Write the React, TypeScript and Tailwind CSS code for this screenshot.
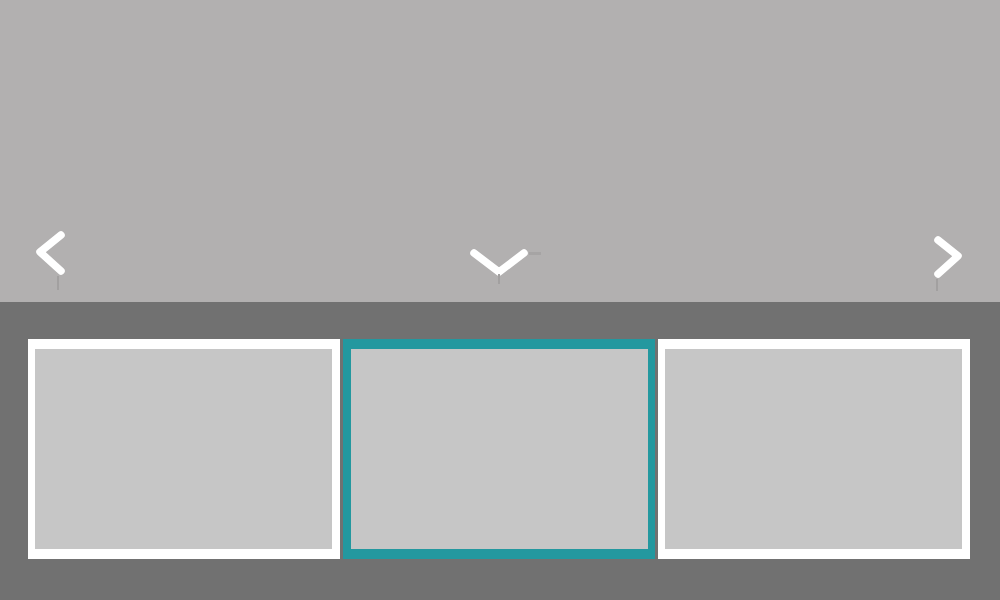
import React from 'react';

const Chevron: React.FC<{ d: string; w: number; h: number; stub: React.ReactNode }> = ({ d, w, h, stub }) => (
  <div className="relative">
    <svg width={w} height={h} viewBox={`0 0 ${w} ${h}`} fill="none" className="blur-[0.6px]">
      <path d={d} stroke="#ffffff" strokeWidth={7.5} strokeLinecap="round" strokeLinejoin="round" />
    </svg>
    {stub}
  </div>
);

export default function App() {
  const thumbs = [false, true, false];

  return (
    <div className="w-[1000px] h-[600px] flex flex-col bg-[#717171] overflow-hidden">
      <div className="h-[302px] bg-[#b2b0b0] flex items-start justify-between pt-[228px] pl-[35px] pr-[35px]">
        <Chevron
          w={40}
          h={50}
          d="M26 7 L5 24 L26 43"
          stub={<div className="absolute left-[22px] top-[48px] w-[2px] h-[14px] bg-[#a2a0a0]" />}
        />
        <div className="pt-[18px] pl-[3px]">
          <Chevron
            w={76}
            h={40}
            d="M7 7 L32 26 L57 7"
            stub={
              <>
                <div className="absolute left-[31px] top-[28px] w-[2px] h-[10px] bg-[#a2a0a0]" />
                <div className="absolute left-[62px] top-[6px] w-[12px] h-[3px] bg-[#a6a4a4]" />
              </>
            }
          />
        </div>
        <div className="pt-[5px]">
          <Chevron
            w={34}
            h={50}
            d="M7 7 L27 23 L7 41"
            stub={<div className="absolute left-[5px] top-[46px] w-[2px] h-[12px] bg-[#a2a0a0]" />}
          />
        </div>
      </div>
      <div className="flex gap-[3px] pl-[28px] pt-[37px]">
        {thumbs.map((active, i) => (
          <div
            key={i}
            className={
              active
                ? 'w-[312px] h-[220px] bg-[#c6c6c6] border-solid border-y-[10px] border-l-[8px] border-r-[7px] border-[#23989f]'
                : 'w-[312px] h-[220px] bg-[#c6c6c6] border-solid border-y-[10px] border-l-[7px] border-r-[8px] border-white'
            }
          />
        ))}
      </div>
    </div>
  );
}
